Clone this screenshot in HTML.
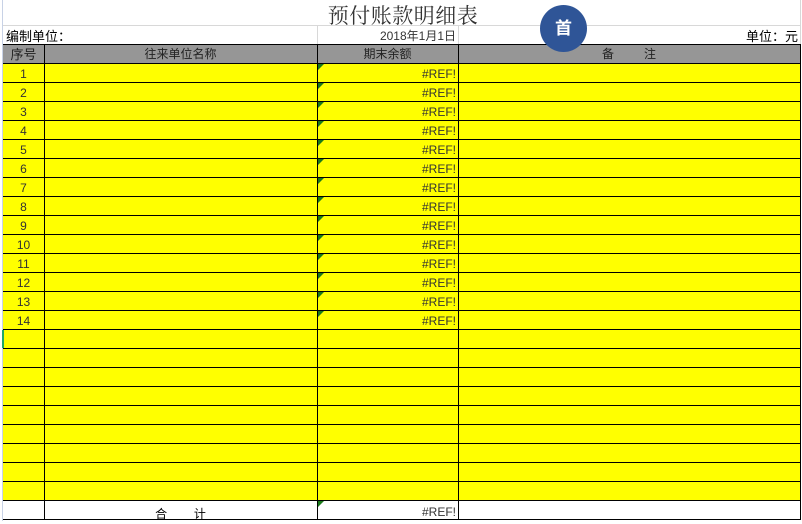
<!DOCTYPE html>
<html><head><meta charset="utf-8"><style>
*{margin:0;padding:0;box-sizing:border-box}
body{width:802px;height:521px;background:#fff;position:relative;overflow:hidden;font-family:"Liberation Sans","Noto Sans CJK SC",sans-serif;font-size:12px;color:#000}
.a{position:absolute}
.h{position:absolute;left:3px;width:798px;height:1px;background:#000}
.v{position:absolute;top:44px;width:1px;height:476px;background:#000}
.n{position:absolute;left:3px;width:41px;text-align:center;color:#333;height:19px;line-height:19px;margin-top:1px}
.r{position:absolute;left:318px;width:138px;text-align:right;color:#333;height:19px;line-height:19px}
.t{position:absolute;left:318px;width:0;height:0;border-top:6px solid #1a7a1a;border-right:6px solid transparent}
</style></head><body>
<div class="a" style="left:2px;top:0;width:1px;height:521px;background:#c8d2e6"></div>
<div class="a" style="left:3px;top:25px;width:798px;height:1px;background:#d8d8d8"></div>
<div class="a" style="left:317px;top:25px;width:1px;height:19px;background:#d8d8d8"></div>
<div class="a" style="left:458px;top:25px;width:1px;height:19px;background:#d8d8d8"></div>
<div class="a" style="left:800px;top:0;width:1px;height:44px;background:#d8d8d8"></div>
<div class="a" style="left:303px;top:2px;width:200px;text-align:center;font-family:'Noto Serif CJK SC','Liberation Serif',serif;font-size:21px;line-height:26px;color:#333;letter-spacing:0.5px">预付账款明细表</div>
<div class="a" style="left:6px;top:29px;font-size:13px;line-height:16px">编制单位：</div>
<div class="a" style="left:318px;top:28px;width:138px;text-align:right;line-height:16px;color:#333">2018年1月1日</div>
<div class="a" style="left:700px;top:29px;width:98px;text-align:right;font-size:13px;line-height:16px">单位：元</div>
<div class="a" style="left:3px;top:44px;width:798px;height:19px;background:#969696"></div>
<div class="a" style="left:3px;top:63px;width:798px;height:437px;background:#ffff00"></div>
<div class="a" style="left:3px;top:45px;width:41px;text-align:center;line-height:19px;color:#222;font-size:13px">序号</div>
<div class="a" style="left:44px;top:45px;width:273px;text-align:center;line-height:19px;color:#222">往来单位名称</div>
<div class="a" style="left:317px;top:45px;width:141px;text-align:center;line-height:19px;color:#222">期末余额</div>
<div class="a" style="left:458px;top:45px;width:342px;text-align:center;line-height:19px;color:#222">备&nbsp;&nbsp;&nbsp;&nbsp;&nbsp;&nbsp;&nbsp;&nbsp;&nbsp;注</div>
<div class="h" style="top:44px"></div><div class="h" style="top:63px"></div><div class="h" style="top:82px"></div><div class="h" style="top:101px"></div><div class="h" style="top:120px"></div><div class="h" style="top:139px"></div><div class="h" style="top:158px"></div><div class="h" style="top:177px"></div><div class="h" style="top:196px"></div><div class="h" style="top:215px"></div><div class="h" style="top:234px"></div><div class="h" style="top:253px"></div><div class="h" style="top:272px"></div><div class="h" style="top:291px"></div><div class="h" style="top:310px"></div><div class="h" style="top:329px"></div><div class="h" style="top:348px"></div><div class="h" style="top:367px"></div><div class="h" style="top:386px"></div><div class="h" style="top:405px"></div><div class="h" style="top:424px"></div><div class="h" style="top:443px"></div><div class="h" style="top:462px"></div><div class="h" style="top:481px"></div><div class="h" style="top:500px"></div><div class="h" style="top:519px"></div>
<div class="v" style="left:44px"></div><div class="v" style="left:317px"></div><div class="v" style="left:458px"></div><div class="v" style="left:800px"></div>
<div class="a" style="left:2px;top:330px;width:2px;height:18px;background:#1fa86a"></div>
<div class="n" style="top:64px">1</div><div class="n" style="top:83px">2</div><div class="n" style="top:102px">3</div><div class="n" style="top:121px">4</div><div class="n" style="top:140px">5</div><div class="n" style="top:159px">6</div><div class="n" style="top:178px">7</div><div class="n" style="top:197px">8</div><div class="n" style="top:216px">9</div><div class="n" style="top:235px">10</div><div class="n" style="top:254px">11</div><div class="n" style="top:273px">12</div><div class="n" style="top:292px">13</div><div class="n" style="top:311px">14</div>
<div class="r" style="top:65px">#REF!</div><div class="r" style="top:84px">#REF!</div><div class="r" style="top:103px">#REF!</div><div class="r" style="top:122px">#REF!</div><div class="r" style="top:141px">#REF!</div><div class="r" style="top:160px">#REF!</div><div class="r" style="top:179px">#REF!</div><div class="r" style="top:198px">#REF!</div><div class="r" style="top:217px">#REF!</div><div class="r" style="top:236px">#REF!</div><div class="r" style="top:255px">#REF!</div><div class="r" style="top:274px">#REF!</div><div class="r" style="top:293px">#REF!</div><div class="r" style="top:312px">#REF!</div><div class="r" style="top:503px">#REF!</div>
<div class="t" style="top:64px"></div><div class="t" style="top:83px"></div><div class="t" style="top:102px"></div><div class="t" style="top:121px"></div><div class="t" style="top:140px"></div><div class="t" style="top:159px"></div><div class="t" style="top:178px"></div><div class="t" style="top:197px"></div><div class="t" style="top:216px"></div><div class="t" style="top:235px"></div><div class="t" style="top:254px"></div><div class="t" style="top:273px"></div><div class="t" style="top:292px"></div><div class="t" style="top:311px"></div><div class="t" style="top:501px"></div>
<div class="a" style="left:44px;top:505px;width:273px;text-align:center;line-height:19px">合&nbsp;&nbsp;&nbsp;&nbsp;&nbsp;&nbsp;&nbsp;&nbsp;计</div>
<div class="a" style="left:540px;top:5px;width:47px;height:47px;border-radius:50%;background:#2f5597;color:#fff;font-size:17px;font-weight:bold;text-align:center;line-height:47px">首</div>
</body></html>
